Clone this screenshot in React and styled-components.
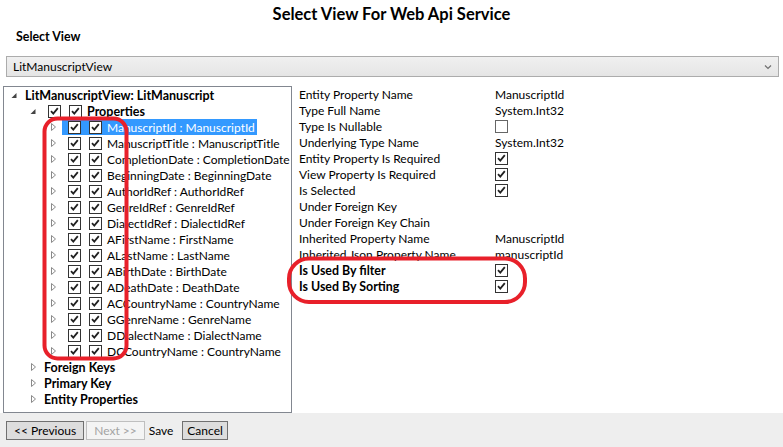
import React from "react";
import styled, { createGlobalStyle } from "styled-components";

const GlobalStyle = createGlobalStyle`
  html, body {
    margin: 0;
    padding: 0;
    background: #fff;
  }
  body {
    font-family: Lato, "Noto Sans", sans-serif;
    font-size: 12px;
    color: #000;
  }
`;

const Page = styled.div`
  position: relative;
  width: 783px;
  height: 447px;
  display: flex;
  flex-direction: column;
  overflow: hidden;
`;

const Title = styled.div`
  height: 29px;
  line-height: 28px;
  text-align: center;
  font-weight: bold;
  font-size: 16.5px;
`;

const SectionLabel = styled.div`
  height: 16px;
  line-height: 16px;
  padding-left: 16px;
  font-weight: bold;
  font-size: 12.4px;
`;

const Dropdown = styled.div`
  margin: 11px 4px 0 6px;
  height: 21px;
  box-sizing: border-box;
  border: 1px solid #acacac;
  background: linear-gradient(#f0f0f0, #e5e5e5);
  display: flex;
  align-items: center;
  justify-content: space-between;
  padding: 0 6px 0 6px;
`;

const Main = styled.div`
  margin-top: 9px;
  height: 327px;
  display: flex;
`;

const TreeBox = styled.div`
  margin-left: 3px;
  width: 289px;
  box-sizing: border-box;
  border: 1px solid #828790;
  background: #fff;
  display: flex;
  flex-direction: column;
`;

const Row = styled.div`
  height: 16px;
  display: flex;
  align-items: center;
  padding-left: ${({ $indent }) => $indent}px;
  white-space: nowrap;
`;

const Expander = styled.svg`
  width: 12px;
  height: 16px;
  flex: none;
`;

const Header = styled.div`
  height: 16px;
  margin-left: 3px;
  padding: 0 2px;
  display: flex;
  align-items: center;
  background: ${({ $selected }) => ($selected ? "#3399ff" : "transparent")};
  color: ${({ $selected }) => ($selected ? "#fff" : "#000")};
  font-weight: ${({ $bold }) => ($bold ? "bold" : "normal")};
  font-size: ${({ $bold }) => ($bold ? "12.5px" : "12px")};
`;

const Box = styled.span`
  width: 13px;
  height: 13px;
  box-sizing: border-box;
  border: 1px solid ${({ $checked }) => ($checked ? "#333" : "#666")};
  background: #fff;
  margin-left: ${({ $ml }) => $ml || 0}px;
  display: inline-flex;
  flex: none;
`;

const Label = styled.span`
  margin-left: ${({ $ml }) => $ml || 0}px;
`;

const PropPanel = styled.div`
  margin-left: 7px;
  flex: 1;
  display: grid;
  grid-template-columns: 196px 1fr;
  grid-auto-rows: 16px;
  align-content: start;
  white-space: nowrap;
`;

const PropCell = styled.div`
  display: flex;
  align-items: center;
  font-weight: ${({ $bold }) => ($bold ? "bold" : "normal")};
  font-size: ${({ $bold }) => ($bold ? "12.4px" : "12px")};
`;

const Footer = styled.div`
  height: 34px;
  background: #eeeeee;
  display: flex;
  align-items: center;
  padding-left: 6px;
  gap: 2px;
`;

const Button = styled.button`
  height: 19px;
  box-sizing: border-box;
  padding: 0 ${({ $pad }) => $pad}px;
  font: inherit;
  border: 1px solid ${({ $disabled, $flat }) =>
    $flat ? "transparent" : $disabled ? "#bfbfbf" : "#707070"};
  background: ${({ $disabled, $flat }) =>
    $flat ? "transparent" : $disabled ? "#f4f4f4" : "#dddddd"};
  color: ${({ $disabled }) => ($disabled ? "#a3a3a3" : "#000")};
  margin-left: ${({ $ml }) => $ml || 0}px;
  line-height: 17px;
`;

const Overlay = styled.svg`
  position: absolute;
  left: 0;
  top: 0;
  width: 783px;
  height: 447px;
  pointer-events: none;
`;

const Check = ({ checked = true, ml }) => (
  <Box $checked={checked} $ml={ml}>
    {checked && (
      <svg width="11" height="11" viewBox="0 0 11 11">
        <path d="M2 5.2 L4.3 7.6 L8.8 2.2" fill="none" stroke="#212121" strokeWidth="1.8" />
      </svg>
    )}
  </Box>
);

const Arrow = ({ open }) => (
  <Expander viewBox="0 0 12 16">
    {open ? (
      <polygon points="8.5,6 8.5,11 3.5,11" fill="#444" />
    ) : (
      <polygon points="4.5,4.5 8.5,8 4.5,11.5" fill="none" stroke="#8a8a8a" strokeWidth="1" />
    )}
  </Expander>
);

const fields = [
  ["ManuscriptId", "ManuscriptId"],
  ["ManuscriptTitle", "ManuscriptTitle"],
  ["CompletionDate", "CompletionDate"],
  ["BeginningDate", "BeginningDate"],
  ["AuthorIdRef", "AuthorIdRef"],
  ["GenreIdRef", "GenreIdRef"],
  ["DialectIdRef", "DialectIdRef"],
  ["AFirstName", "FirstName"],
  ["ALastName", "LastName"],
  ["ABirthDate", "BirthDate"],
  ["ADeathDate", "DeathDate"],
  ["ACCountryName", "CountryName"],
  ["GGenreName", "GenreName"],
  ["DDialectName", "DialectName"],
  ["DCCountryName", "CountryName"],
];

const props = [
  ["Entity Property Name", "ManuscriptId"],
  ["Type Full Name", "System.Int32"],
  ["Type Is Nullable", false],
  ["Underlying Type Name", "System.Int32"],
  ["Entity Property Is Required", true],
  ["View Property Is Required", true],
  ["Is Selected", true],
  ["Under Foreign Key", ""],
  ["Under Foreign Key Chain", ""],
  ["Inherited Property Name", "ManuscriptId"],
  ["Inherited Json Property Name", "manuscriptId"],
  ["Is Used By filter", true, true],
  ["Is Used By Sorting", true, true],
];

export default function App() {
  return (
    <Page>
      <GlobalStyle />
      <Title>Select View For Web Api Service</Title>
      <SectionLabel>Select View</SectionLabel>
      <Dropdown>
        <span>LitManuscriptView</span>
        <svg width="8" height="6" viewBox="0 0 8 6">
          <polyline points="1,1.5 4,4.5 7,1.5" fill="none" stroke="#707070" strokeWidth="1.2" />
        </svg>
      </Dropdown>
      <Main>
        <TreeBox>
          <Row $indent={4}>
            <Arrow open />
            <Header $bold>LitManuscriptView: LitManuscript</Header>
          </Row>
          <Row $indent={23}>
            <Arrow open />
            <Header $bold>
              <Check ml={4} />
              <Check ml={8} />
              <Label $ml={5}>Properties</Label>
            </Header>
          </Row>
          {fields.map(([a, b], i) => (
            <Row key={a} $indent={43}>
              <Arrow />
              <Header $selected={i === 0}>
                <Check ml={4} />
                <Check ml={8} />
                <Label $ml={5}>
                  {a} : {b}
                </Label>
              </Header>
            </Row>
          ))}
          {["Foreign Keys", "Primary Key", "Entity Properties"].map((t) => (
            <Row key={t} $indent={23}>
              <Arrow />
              <Header $bold>{t}</Header>
            </Row>
          ))}
        </TreeBox>
        <PropPanel>
          {props.map(([label, value, bold]) => (
            <React.Fragment key={label}>
              <PropCell $bold={bold}>{label}</PropCell>
              <PropCell>
                {typeof value === "boolean" ? <Check checked={value} /> : value}
              </PropCell>
            </React.Fragment>
          ))}
        </PropPanel>
      </Main>
      <Footer>
        <Button $pad={7}>&lt;&lt; Previous</Button>
        <Button $pad={7} $disabled>Next &gt;&gt;</Button>
        <Button $pad={1} $flat>Save</Button>
        <Button $pad={4} $ml={5}>Cancel</Button>
      </Footer>
      <Overlay viewBox="0 0 783 447">
        <rect x="44.5" y="118.5" width="82" height="240" rx="13" fill="none" stroke="#e8202a" strokeWidth="4" />
        <rect x="289" y="258.5" width="236" height="43.5" rx="20" fill="none" stroke="#e8202a" strokeWidth="4" />
      </Overlay>
    </Page>
  );
}
